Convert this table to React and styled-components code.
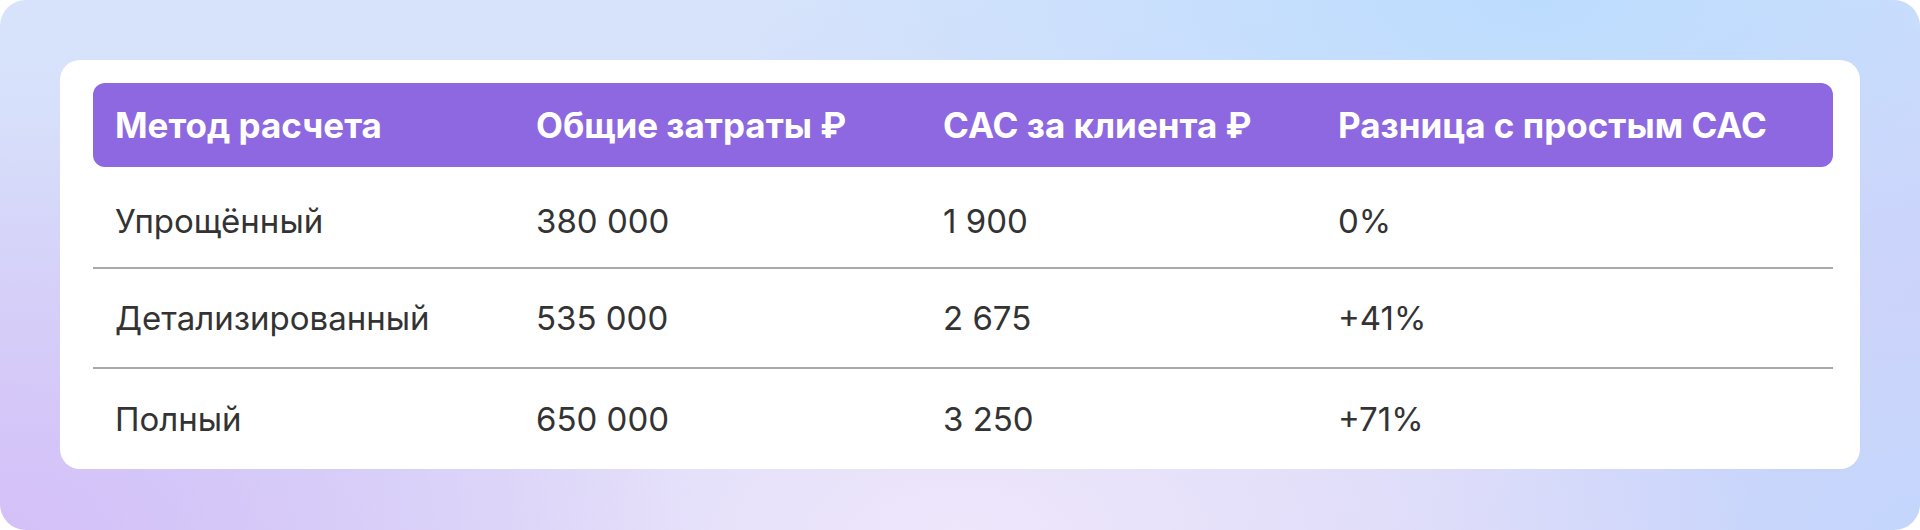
import React from 'react';
import styled, { createGlobalStyle } from 'styled-components';

const GlobalStyle = createGlobalStyle`
    html, body {
        margin: 0;
        padding: 0;
        background: #fff;
    }
    body {
        font-family: Inter, "Noto Sans", sans-serif;
    }
`;

const Frame = styled.div`
    width: 1920px;
    height: 530px;
    box-sizing: border-box;
    padding: 60px 60px 61px;
    border-radius: 26px;
    overflow: hidden;
    background:
        radial-gradient(ellipse 700px 420px at 0% 100%, rgba(212, 192, 248, 1) 0%, rgba(212, 192, 248, 0) 100%),
        radial-gradient(ellipse 800px 380px at 50% 100%, rgba(238, 230, 251, 1) 0%, rgba(238, 230, 251, 0) 100%),
        radial-gradient(ellipse 600px 420px at 100% 100%, rgba(196, 214, 252, 1) 0%, rgba(196, 214, 252, 0) 100%),
        radial-gradient(ellipse 800px 360px at 80% 0%, rgba(188, 220, 254, 1) 0%, rgba(188, 220, 254, 0) 100%),
        radial-gradient(ellipse 500px 400px at 100% 55%, rgba(210, 208, 250, 1) 0%, rgba(210, 208, 250, 0) 100%),
        linear-gradient(180deg, #d7e3fb 0%, #d6d6f8 100%);
`;

const Card = styled.div`
    height: 100%;
    box-sizing: border-box;
    background: #fff;
    border-radius: 20px;
    padding: 23px 27px 0 33px;
`;

const Table = styled.div`
    display: grid;
    grid-template-rows: 84px 2px repeat(3, 100px);
`;

const HeadRow = styled.div`
    display: grid;
    grid-template-columns: 421px 407px 395px 1fr;
    align-items: center;
    background: #8e68e0;
    border-radius: 12px;
`;

const Row = styled.div`
    display: grid;
    grid-template-columns: 421px 407px 395px 1fr;
    align-items: center;
    box-sizing: border-box;
    border-bottom: ${p => (p.$last ? 'none' : '2px solid #a9a9a9')};
    grid-row: ${p => p.$index + 3};
`;

const HeadCell = styled.div`
    padding-left: 22px;
    font-size: 35px;
    font-weight: 700;
    color: #fff;
    white-space: nowrap;
`;

const Cell = styled.div`
    padding-left: 22px;
    padding-top: ${p => (p.$first ? '6px' : '0')};
    font-size: 33px;
    font-weight: 400;
    color: #333;
    white-space: nowrap;
`;

const columns = ['Метод расчета', 'Общие затраты ₽', 'CAC за клиента ₽', 'Разница с простым CAC'];

const rows = [
    ['Упрощённый', '380 000', '1 900', '0%'],
    ['Детализированный', '535 000', '2 675', '+41%'],
    ['Полный', '650 000', '3 250', '+71%'],
];

const App = () => {
    return (
        <>
            <GlobalStyle />
            <Frame>
                <Card>
                    <Table>
                        <HeadRow>
                            {columns.map(c => (
                                <HeadCell key={c}>{c}</HeadCell>
                            ))}
                        </HeadRow>
                        {rows.map((r, i) => (
                            <Row key={r[0]} $index={i} $last={i === rows.length - 1}>
                                {r.map((v, j) => (
                                    <Cell key={j} $first={i === 0}>{v}</Cell>
                                ))}
                            </Row>
                        ))}
                    </Table>
                </Card>
            </Frame>
        </>
    );
};

export default App;
